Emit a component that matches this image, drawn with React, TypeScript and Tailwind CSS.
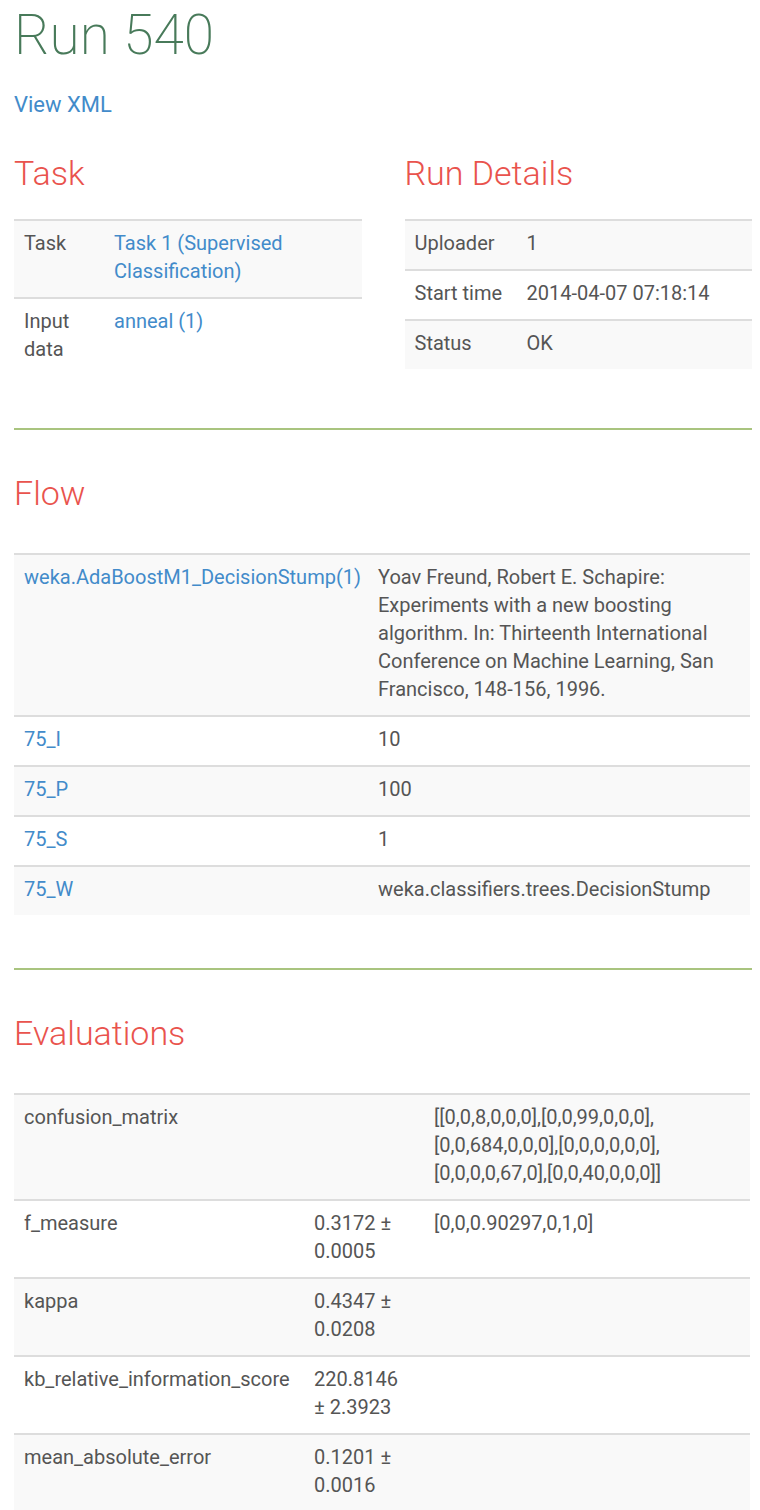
import React from "react";

const F = { fontFamily: "Roboto, 'Liberation Sans', sans-serif" };

function Row({ cells, odd, widths }: { cells: React.ReactNode[]; odd: boolean; widths: string[] }) {
  return (
    <div className={`flex border-t-2 border-[#dddddd] ${odd ? "bg-[#f9f9f9]" : "bg-white"}`}>
      {cells.map((c, i) => (
        <div key={i} className={`${widths[i]} px-[10px] pt-[8px] pb-[12px] shrink-0`}>
          {c}
        </div>
      ))}
    </div>
  );
}

const A = ({ children }: { children: React.ReactNode }) => (
  <a className="text-[#428bca]" href="#">
    {children}
  </a>
);

const H2 = ({ children, className = "" }: { children: React.ReactNode; className?: string }) => (
  <h2 className={`text-[34px] leading-[40px] font-light text-[#e9534d] ${className}`}>{children}</h2>
);

export default function App() {
  return (
    <div style={F} className="bg-white w-[760px] px-[14px] pb-4 text-[20px] leading-[28px] text-[#555555]">
      <h1 className="text-[55px] leading-[60px] font-extralight text-[#487a5a] pt-[5px]">Run 540</h1>
      <div className="mt-[27px] text-[22px] leading-[26px]">
        <A>View XML</A>
      </div>
      <div className="grid grid-cols-2 gap-[43px] mt-[35px] w-[738px]">
        <div>
          <H2>Task</H2>
          <div className="mt-[26px]">
            <Row odd widths={["w-[90px]", "flex-1"]} cells={["Task", <A key="a">Task 1 (Supervised Classification)</A>]} />
            <Row odd={false} widths={["w-[90px]", "flex-1"]} cells={["Input data", <A key="a">anneal (1)</A>]} />
          </div>
        </div>
        <div>
          <H2>Run Details</H2>
          <div className="mt-[26px]">
            <Row odd widths={["w-[112px]", "flex-1"]} cells={["Uploader", "1"]} />
            <Row odd={false} widths={["w-[112px]", "flex-1"]} cells={["Start time", "2014-04-07 07:18:14"]} />
            <Row odd widths={["w-[112px]", "flex-1"]} cells={["Status", "OK"]} />
          </div>
        </div>
      </div>
      <div className="mt-[53px] h-[2px] w-[738px] bg-[#a9c47f]" />
      <H2 className="mt-[43px]">Flow</H2>
      <div className="mt-[40px] w-[736px]">
        <Row
          odd
          widths={["w-[354px]", "flex-1"]}
          cells={[
            <A key="a">weka.AdaBoostM1_DecisionStump(1)</A>,
            "Yoav Freund, Robert E. Schapire: Experiments with a new boosting algorithm. In: Thirteenth International Conference on Machine Learning, San Francisco, 148-156, 1996.",
          ]}
        />
        <Row odd={false} widths={["w-[354px]", "flex-1"]} cells={[<A key="a">75_I</A>, "10"]} />
        <Row odd widths={["w-[354px]", "flex-1"]} cells={[<A key="a">75_P</A>, "100"]} />
        <Row odd={false} widths={["w-[354px]", "flex-1"]} cells={[<A key="a">75_S</A>, "1"]} />
        <Row odd widths={["w-[354px]", "flex-1"]} cells={[<A key="a">75_W</A>, "weka.classifiers.trees.DecisionStump"]} />
      </div>
      <div className="mt-[53px] h-[2px] w-[738px] bg-[#a9c47f]" />
      <H2 className="mt-[43px]">Evaluations</H2>
      <div className="mt-[40px] w-[736px]">
        <Row
          odd
          widths={["w-[290px]", "w-[120px]", "flex-1"]}
          cells={["confusion_matrix", "", "[[0,0,8,0,0,0],[0,0,99,0,0,0],[0,0,684,0,0,0],[0,0,0,0,0,0],[0,0,0,0,67,0],[0,0,40,0,0,0]]"]}
        />
        <Row odd={false} widths={["w-[290px]", "w-[120px]", "flex-1"]} cells={["f_measure", "0.3172 ± 0.0005", "[0,0,0.90297,0,1,0]"]} />
        <Row odd widths={["w-[290px]", "w-[120px]", "flex-1"]} cells={["kappa", "0.4347 ± 0.0208", ""]} />
        <Row
          odd={false}
          widths={["w-[290px]", "w-[120px]", "flex-1"]}
          cells={[
            "kb_relative_information_score",
            <span key="v">
              220.8146
              <br />± 2.3923
            </span>,
            "",
          ]}
        />
        <Row odd widths={["w-[290px]", "w-[120px]", "flex-1"]} cells={["mean_absolute_error", "0.1201 ± 0.0016", ""]} />
      </div>
    </div>
  );
}
